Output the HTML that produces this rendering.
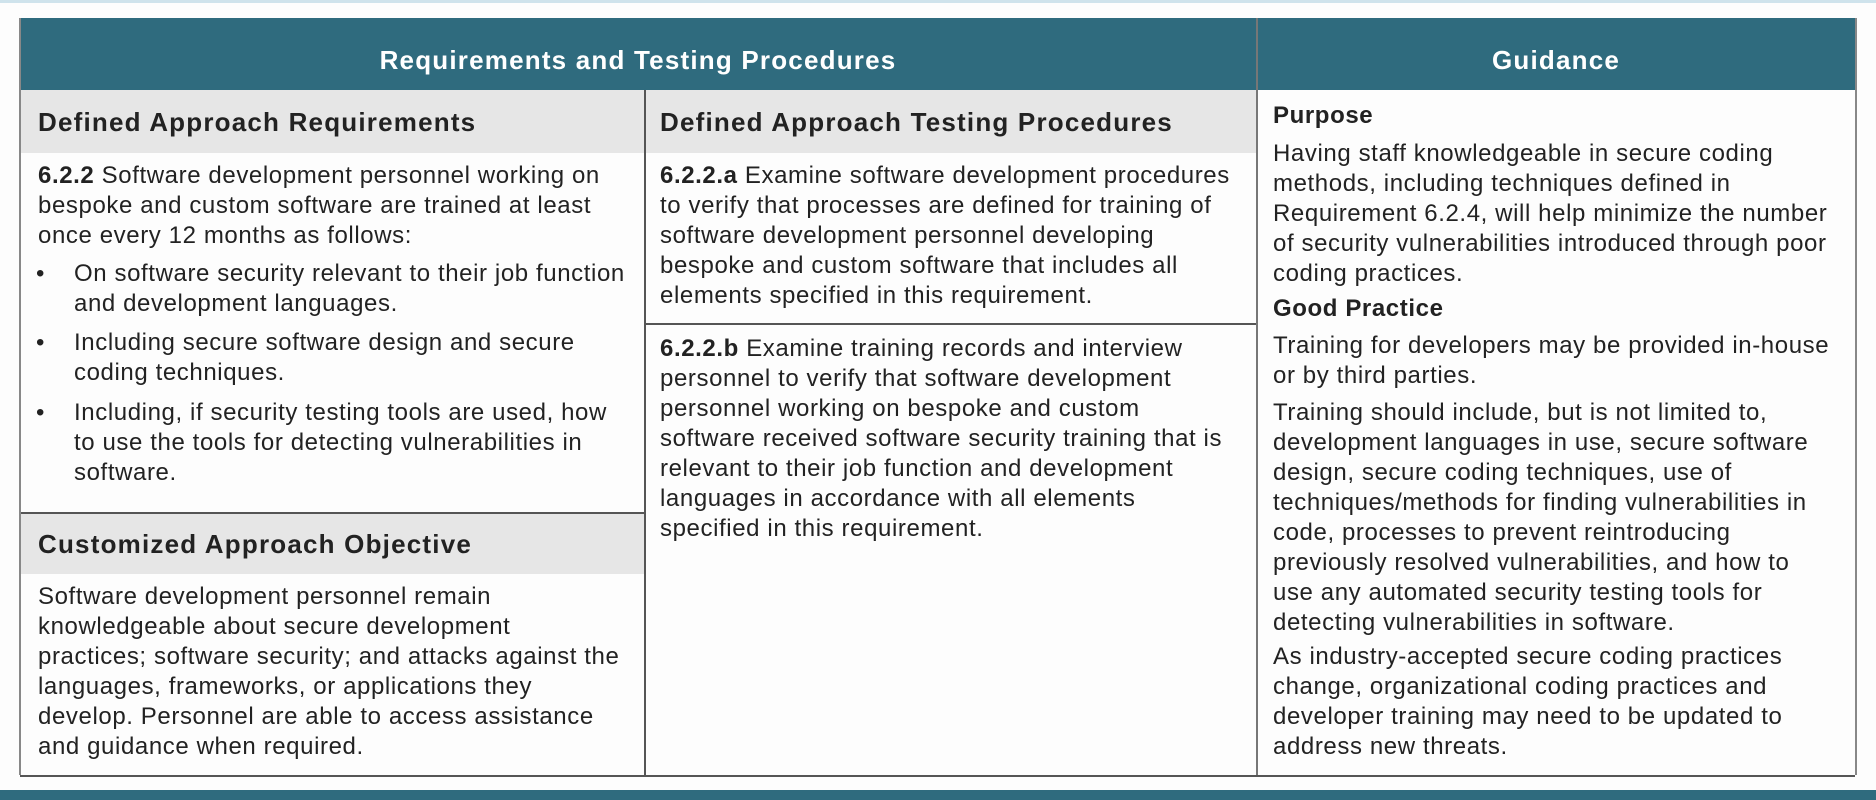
<!DOCTYPE html>
<html><head><meta charset="utf-8"><style>
*{margin:0;padding:0;box-sizing:border-box}
body{width:1876px;height:800px;background:#fdfdfd;position:relative;overflow:hidden;font-family:"Liberation Sans",Arial,sans-serif;color:#222;font-size:24px;line-height:30px;letter-spacing:0.6px}
.a{position:absolute;white-space:nowrap}
.h{background:#2f6b7e;position:absolute;top:18px;height:72px;color:#fff;font-weight:bold;font-size:26px;letter-spacing:1.2px;text-align:center;line-height:84px}
.g{position:absolute;background:#e6e6e6}
.t{font-weight:bold;font-size:26px;letter-spacing:1.2px}
.l{position:absolute;background:#555}
b{font-weight:bold}
</style></head><body>
<div class="a" style="left:0;top:0;width:1876px;height:3px;background:#cfe3ec"></div>
<div class="a" style="left:0;top:790px;width:1876px;height:10px;background:#2f6b7e"></div>
<div class="h" style="left:20px;width:1236px">Requirements and Testing Procedures</div>
<div class="h" style="left:1257px;width:598px">Guidance</div>
<div class="g" style="left:20px;top:90px;width:624px;height:63px"></div>
<div class="g" style="left:645px;top:90px;width:611px;height:63px"></div>
<div class="g" style="left:20px;top:512px;width:624px;height:62px"></div>
<div class="l" style="left:644px;top:90px;width:1.5px;height:685px"></div>
<div class="l" style="left:1256px;top:18px;width:1.5px;height:757px;background:#777"></div>
<div class="l" style="left:20px;top:512px;width:624px;height:1.5px"></div>
<div class="l" style="left:645px;top:323px;width:611px;height:1.5px"></div>
<div class="l" style="left:20px;top:775px;width:1835px;height:2px"></div>
<div class="l" style="left:19px;top:18px;width:1.5px;height:757px;background:#888"></div>
<div class="l" style="left:1855px;top:18px;width:1.5px;height:757px;background:#888"></div>

<div class="a t" style="left:38px;top:107px">Defined Approach Requirements</div>
<div class="a t" style="left:660px;top:107px">Defined Approach Testing Procedures</div>
<div class="a t" style="left:38px;top:529px">Customized Approach Objective</div>

<div class="a" style="left:38px;top:161px"><b>6.2.2</b> Software development personnel working on<br>bespoke and custom software are trained at least<br>once every 12 months as follows:</div>
<div class="a" style="left:36px;top:259px">•</div>
<div class="a" style="left:74px;top:259px">On software security relevant to their job function<br>and development languages.</div>
<div class="a" style="left:36px;top:328px">•</div>
<div class="a" style="left:74px;top:328px">Including secure software design and secure<br>coding techniques.</div>
<div class="a" style="left:36px;top:398px">•</div>
<div class="a" style="left:74px;top:398px">Including, if security testing tools are used, how<br>to use the tools for detecting vulnerabilities in<br>software.</div>
<div class="a" style="left:38px;top:582px">Software development personnel remain<br>knowledgeable about secure development<br>practices; software security; and attacks against the<br>languages, frameworks, or applications they<br>develop. Personnel are able to access assistance<br>and guidance when required.</div>

<div class="a" style="left:660px;top:161px"><b>6.2.2.a</b> Examine software development procedures<br>to verify that processes are defined for training of<br>software development personnel developing<br>bespoke and custom software that includes all<br>elements specified in this requirement.</div>
<div class="a" style="left:660px;top:334px"><b>6.2.2.b</b> Examine training records and interview<br>personnel to verify that software development<br>personnel working on bespoke and custom<br>software received software security training that is<br>relevant to their job function and development<br>languages in accordance with all elements<br>specified in this requirement.</div>

<div class="a" style="left:1273px;top:101px;font-weight:bold">Purpose</div>
<div class="a" style="left:1273px;top:139px">Having staff knowledgeable in secure coding<br>methods, including techniques defined in<br>Requirement 6.2.4, will help minimize the number<br>of security vulnerabilities introduced through poor<br>coding practices.</div>
<div class="a" style="left:1273px;top:294px;font-weight:bold">Good Practice</div>
<div class="a" style="left:1273px;top:331px">Training for developers may be provided in-house<br>or by third parties.</div>
<div class="a" style="left:1273px;top:398px">Training should include, but is not limited to,<br>development languages in use, secure software<br>design, secure coding techniques, use of<br>techniques/methods for finding vulnerabilities in<br>code, processes to prevent reintroducing<br>previously resolved vulnerabilities, and how to<br>use any automated security testing tools for<br>detecting vulnerabilities in software.</div>
<div class="a" style="left:1273px;top:642px">As industry-accepted secure coding practices<br>change, organizational coding practices and<br>developer training may need to be updated to<br>address new threats.</div>
</body></html>
